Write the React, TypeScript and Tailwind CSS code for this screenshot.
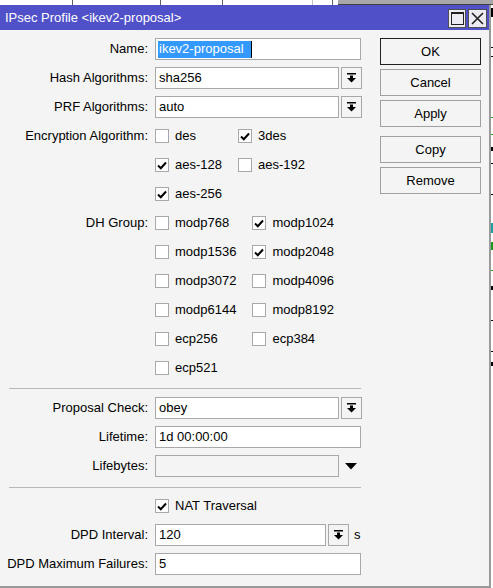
import React from "react";

const FONT = "font-['Liberation_Sans',Arial,sans-serif]";

function DropIcon() {
  return (
    <svg width="9" height="10" viewBox="0 0 9 10" className="block">
      <rect x="0" y="0" width="9" height="1.5" fill="#000" />
      <rect x="3" y="2.5" width="3" height="3" fill="#000" />
      <polygon points="0,5 9,5 4.5,9.5" fill="#000" />
    </svg>
  );
}

function Check({ checked, label }: { checked?: boolean; label: string }) {
  return (
    <div className="flex items-center h-[22px]">
      <div className="w-[14px] h-[14px] border border-[#a8a8a8] bg-white flex items-center justify-center">
        {checked && (
          <svg width="10" height="9" viewBox="0 0 10 9">
            <polyline points="1,4.5 3.8,7.2 9,1.5" fill="none" stroke="#000" strokeWidth="2" />
          </svg>
        )}
      </div>
      <span className="ml-[6px]">{label}</span>
    </div>
  );
}

function Row({ label, children, className = "" }: { label?: string; children: React.ReactNode; className?: string }) {
  return (
    <div className={`flex ${className}`}>
      <div className="w-[148px] h-[22px] flex items-center justify-end whitespace-nowrap">{label}</div>
      <div className="ml-[7px] flex-1">{children}</div>
    </div>
  );
}

function TextBox({ value, className = "w-[206px]" }: { value: string; className?: string }) {
  return (
    <div className={`h-[22px] border border-[#a8a8a8] bg-white flex items-center pl-[3px] ${className}`}>
      {value}
    </div>
  );
}

function Combo({ value, width = "w-[184px]", suffix }: { value: string; width?: string; suffix?: string }) {
  return (
    <div className="flex items-center">
      <TextBox value={value} className={width} />
      <div className="ml-[2px] w-[21px] h-[22px] border border-[#a8a8a8] bg-[#f4f4f4] flex items-center justify-center">
        <DropIcon />
      </div>
      {suffix && <span className="ml-[5px]">{suffix}</span>}
    </div>
  );
}

function Btn({ label, primary }: { label: string; primary?: boolean }) {
  return (
    <div
      className={`w-[101px] h-[27px] flex items-center justify-center bg-[#f4f4f4] border ${
        primary ? "border-[#202020]" : "border-[#a0a0a0]"
      }`}
    >
      {label}
    </div>
  );
}

export default function App() {
  const enc = [
    { label: "des", checked: false },
    { label: "3des", checked: true },
    { label: "aes-128", checked: true },
    { label: "aes-192", checked: false },
    { label: "aes-256", checked: true },
  ];
  const dh = [
    { label: "modp768", checked: false },
    { label: "modp1024", checked: true },
    { label: "modp1536", checked: false },
    { label: "modp2048", checked: true },
    { label: "modp3072", checked: false },
    { label: "modp4096", checked: false },
    { label: "modp6144", checked: false },
    { label: "modp8192", checked: false },
    { label: "ecp256", checked: false },
    { label: "ecp384", checked: false },
    { label: "ecp521", checked: false },
  ];

  return (
    <div className={`w-[493px] h-[588px] bg-white overflow-hidden text-[13px] text-black ${FONT}`}>
      {/* background window strip */}
      <div className="flex h-[5px]">
        <div className="w-[73px] border-r border-[#606060]" />
        <div className="w-[88px] border-r border-[#606060]" />
        <div className="w-[62px] border-r border-[#606060]" />
        <div className="w-[90px] border-r border-[#c0c0c0]" />
        <div className="w-[20px] border-r border-[#606060]" />
        <div className="w-[5px]" />
        <div className="flex-1 bg-[#a8a8a8] border-b border-[#404040]" />
      </div>
      <div className="flex">
        <div className="w-[491px] h-[583px] bg-[#f4f4f4] border-r-2 border-b-2 border-[#9a9a9a] flex flex-col">
          {/* title bar */}
          <div className="h-[25px] bg-[#5050c9] flex items-center pl-[5px] pr-[2px]">
            <span className="text-white text-[13px] flex-1">IPsec Profile &lt;ikev2-proposal&gt;</span>
            <div className="flex gap-[2px] mt-[2px]">
              <div className="w-[18px] h-[19px] bg-[#ecebf4] border border-[#505050] flex items-center justify-center">
                <div className="w-[13px] h-[13px] border border-[#202020] border-t-2" />
              </div>
              <div className="w-[19px] h-[19px] bg-[#ecebf4] border border-[#505050] flex items-center justify-center">
                <svg width="13" height="13" viewBox="0 0 13 13">
                  <path d="M1 1 L12 12 M12 1 L1 12" stroke="#202020" strokeWidth="1.6" />
                </svg>
              </div>
            </div>
          </div>

          {/* body */}
          <div className="flex pt-[8px]">
            <div className="w-[370px] flex flex-col">
              <Row label="Name:">
                <div className="w-[206px] h-[22px] border border-[#a8a8a8] bg-white flex items-center pl-[2px]">
                  <span className="bg-[#3399ff] text-white h-[17px] flex items-center pl-[1px] pr-[7px]">ikev2-proposal</span>
                  <span className="w-px h-[17px] bg-black" />
                </div>
              </Row>
              <Row label="Hash Algorithms:" className="mt-[7px]">
                <Combo value="sha256" />
              </Row>
              <Row label="PRF Algorithms:" className="mt-[7px]">
                <Combo value="auto" />
              </Row>
              <Row label="Encryption Algorithm:" className="mt-[7px]">
                <div className="grid grid-cols-[auto_auto] justify-start gap-x-[16px] gap-y-[7px]">
                  {enc.map((e) => (
                    <Check key={e.label} label={e.label} checked={e.checked} />
                  ))}
                </div>
              </Row>
              <Row label="DH Group:" className="mt-[7px]">
                <div className="grid grid-cols-[auto_auto] justify-start gap-x-[16px] gap-y-[7px]">
                  {dh.map((e) => (
                    <Check key={e.label} label={e.label} checked={e.checked} />
                  ))}
                </div>
              </Row>
              <div className="ml-[9px] w-[352px] h-px bg-[#b8b8b8] mt-[9px]" />
              <Row label="Proposal Check:" className="mt-[8px]">
                <Combo value="obey" />
              </Row>
              <Row label="Lifetime:" className="mt-[7px]">
                <TextBox value="1d 00:00:00" />
              </Row>
              <Row label="Lifebytes:" className="mt-[7px]">
                <div className="flex items-center">
                  <div className="w-[184px] h-[22px] border border-[#a8a8a8] bg-[#f4f4f4]" />
                  <svg width="12" height="7" viewBox="0 0 12 7" className="ml-[6px]">
                    <polygon points="0,0 12,0 6,6.5" fill="#000" />
                  </svg>
                </div>
              </Row>
              <div className="ml-[9px] w-[352px] h-px bg-[#b8b8b8] mt-[10px]" />
              <Row className="mt-[7px]">
                <Check label="NAT Traversal" checked />
              </Row>
              <Row label="DPD Interval:" className="mt-[7px]">
                <Combo value="120" width="w-[171px]" suffix="s" />
              </Row>
              <Row label="DPD Maximum Failures:" className="mt-[7px]">
                <TextBox value="5" />
              </Row>
            </div>

            <div className="ml-[10px] flex flex-col gap-[4px]">
              <Btn label="OK" primary />
              <Btn label="Cancel" />
              <Btn label="Apply" />
              <div className="h-px" />
              <Btn label="Copy" />
              <Btn label="Remove" />
            </div>
          </div>
        </div>
        {/* background window edge */}
        <div className="flex-1 flex flex-col bg-white">
          <div className="h-[9px] bg-black mt-[3px]" />
          <div className="h-px bg-black mt-[30px]" />
          <div className="h-px bg-black mt-[8px]" />
          <div className="h-px bg-[#2a9a2a] mt-[60px]" />
          <div className="h-px bg-[#2a9a2a] mt-[16px]" />
          <div className="h-[4px] bg-black mt-[12px]" />
          <div className="h-px bg-black mt-[12px]" />
          <div className="h-px bg-black mt-[30px]" />
          <div className="h-[10px] bg-[#1aa0a0] mt-[28px]" />
          <div className="h-[8px] bg-[#1a9a1a] mt-[9px]" />
          <div className="h-px bg-[#2a9a2a] mt-[20px]" />
          <div className="h-[4px] bg-black mt-[15px]" />
          <div className="h-px bg-black mt-[30px]" />
          <div className="h-px bg-black mt-[30px]" />
          <div className="h-[4px] bg-black mt-[10px]" />
        </div>
      </div>
    </div>
  );
}
